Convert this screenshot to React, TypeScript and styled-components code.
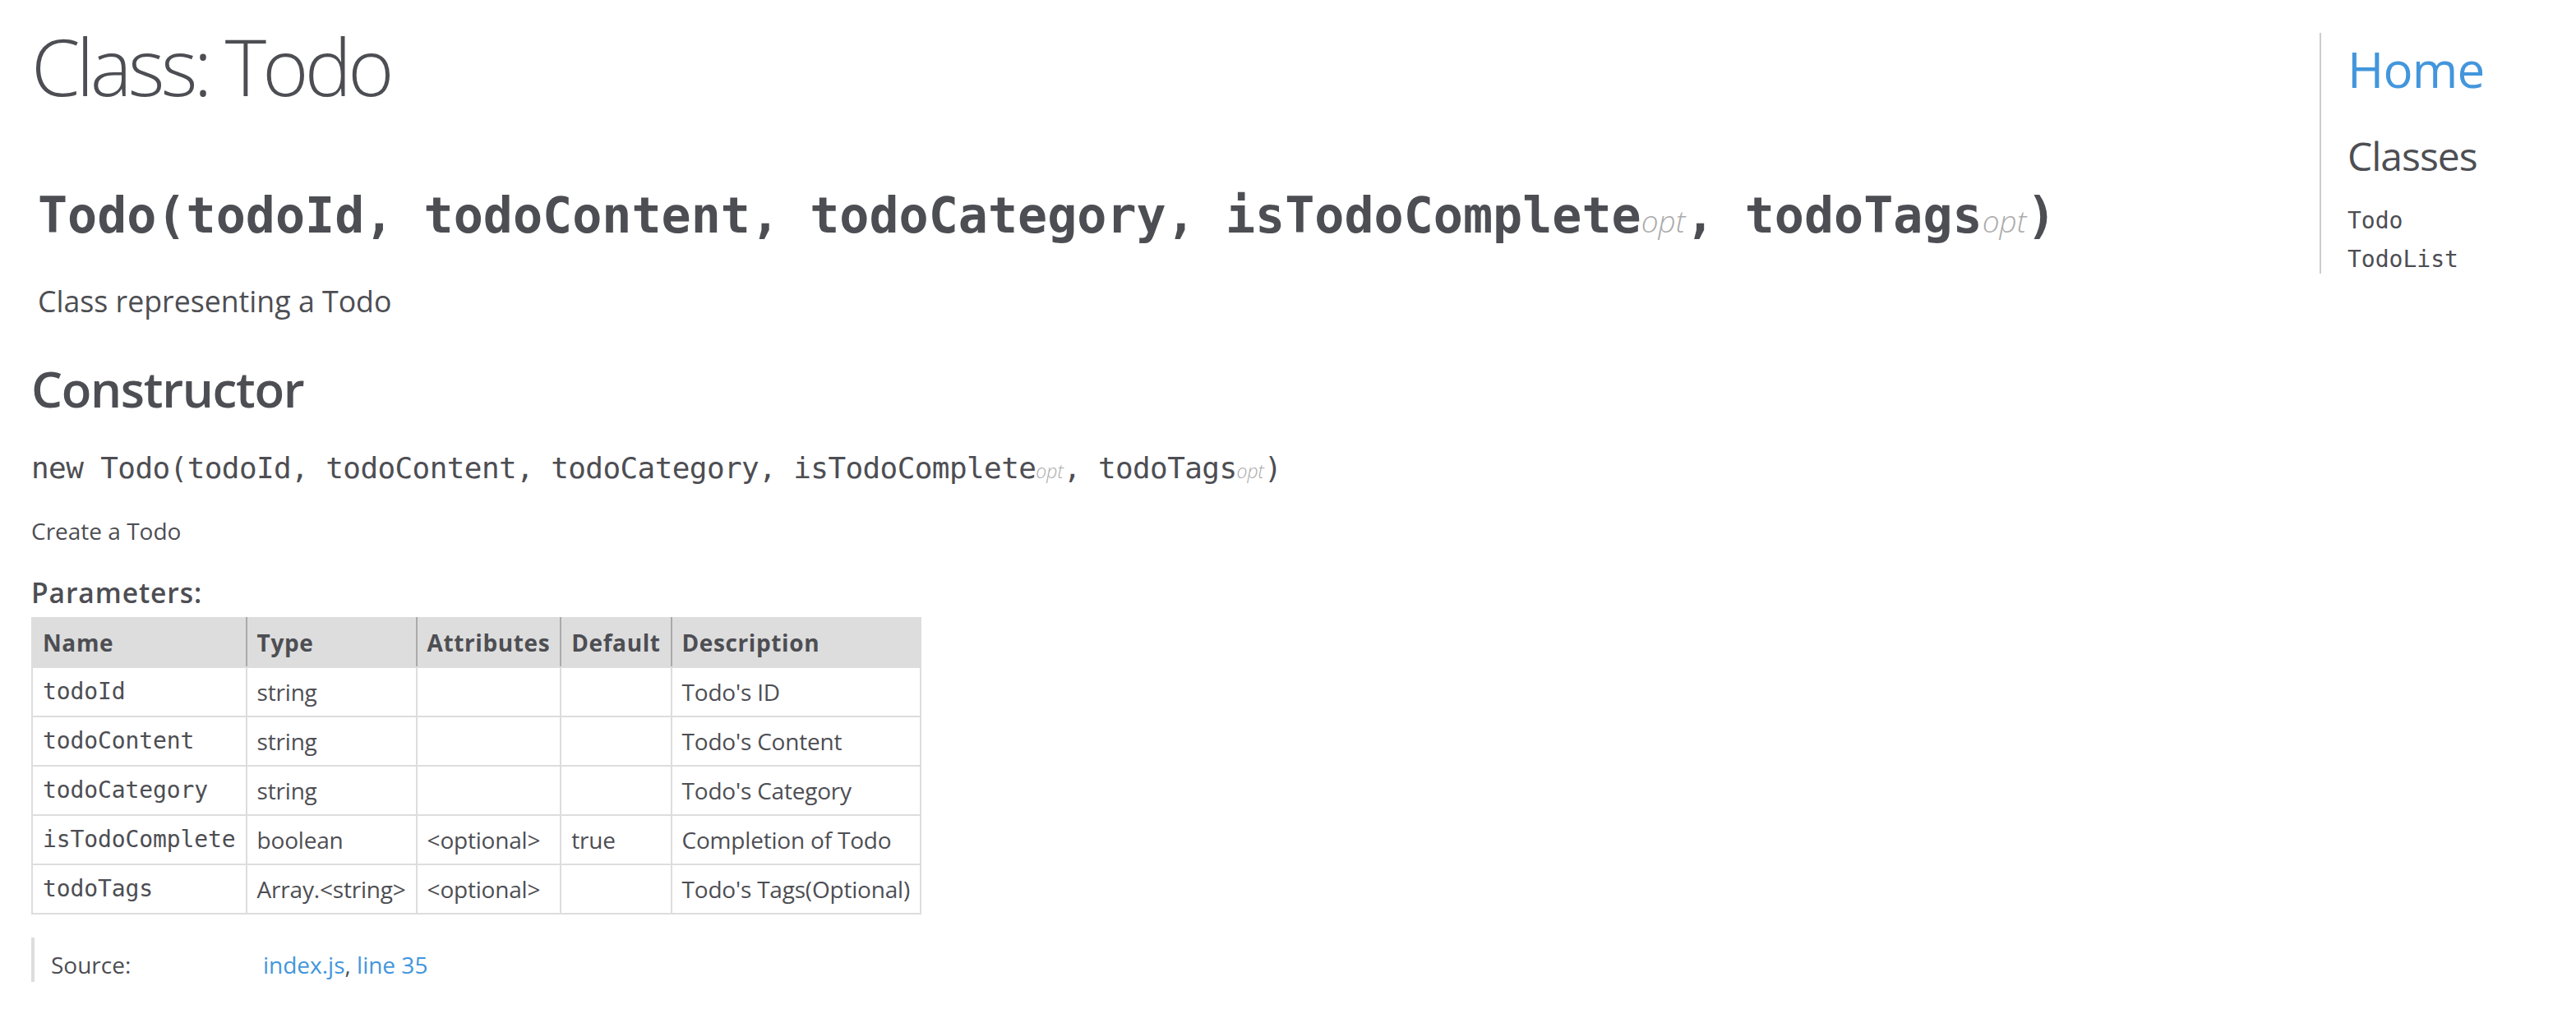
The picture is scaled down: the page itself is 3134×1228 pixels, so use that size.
import React from "react";
import styled, { createGlobalStyle } from "styled-components";

const GlobalStyle = createGlobalStyle`
  html, body {
    margin: 0;
    padding: 0;
    background: #ffffff;
  }
  body {
    font-family: "Open Sans", "Liberation Sans", sans-serif;
    font-size: 28px;
    line-height: 42px;
    color: #4d4e53;
  }
`;

const Page = styled.div`
  display: flex;
  align-items: flex-start;
  width: 100%;
  min-height: 1228px;
`;

const Main = styled.main`
  flex: 1 1 auto;
  padding-left: 38px;
  min-width: 0;
`;

const PageTitle = styled.h1`
  margin: 32px 0 0;
  font-family: "Open Sans", sans-serif;
  font-weight: 300;
  font-size: 96px;
  line-height: 96px;
  letter-spacing: -4.8px;
  color: #4d4e53;
`;

const Header = styled.header`
  padding: 0 8px;
`;

const Signature = styled.h2`
  margin: 98px 0 0;
  font-family: "DejaVu Sans Mono", monospace;
  font-weight: 700;
  font-size: 60px;
  line-height: 72px;
  color: #4d4e53;
  white-space: nowrap;
`;

const Opt = styled.span<{ $size: number }>`
  font-family: "Open Sans", sans-serif;
  font-style: italic;
  font-weight: 300;
  font-size: ${(p) => p.$size}px;
  line-height: 1;
  letter-spacing: 0;
  color: #aaaaaa;
`;

const ClassDescription = styled.div`
  margin-top: 43px;
  font-size: 35.7px;
  line-height: 51px;
`;

const SectionTitle = styled.h2`
  margin: 45px 0 0;
  font-family: "Open Sans", sans-serif;
  font-weight: 600;
  font-size: 60px;
  line-height: 72px;
  letter-spacing: -1.3px;
  color: #4d4e53;
`;

const MemberName = styled.h4`
  margin: 37px 0 0;
  font-family: "DejaVu Sans Mono", monospace;
  font-weight: 400;
  font-size: 36px;
  line-height: 48px;
  letter-spacing: -0.6px;
  color: #4d4e53;
  white-space: nowrap;
`;

const Description = styled.div`
  margin-top: 31px;
  font-size: 28px;
  line-height: 42px;
`;

const SubsectionTitle = styled.h5`
  margin: 32px 0 0;
  font-family: "Open Sans", sans-serif;
  font-weight: 600;
  font-size: 33.6px;
  line-height: 44px;
  letter-spacing: 0.9px;
  color: #4d4e53;
`;

const ParamsTable = styled.table`
  margin-top: 8px;
  border-collapse: collapse;
  border-spacing: 0;
  font-size: 28px;
  line-height: 42px;
  color: #4d4e53;
`;

const HeadRow = styled.tr`
  background: #dddddd;
`;

const HeadCell = styled.th`
  text-align: left;
  vertical-align: top;
  padding: 8px 12px;
  font-weight: 700;
  letter-spacing: 0.6px;
  border: 2px solid #dddddd;
  border-right: 2px solid #aaaaaa;
  &:last-child {
    border-right: 2px solid #dddddd;
  }
`;

const Cell = styled.td<{ $mono?: boolean }>`
  text-align: left;
  vertical-align: top;
  padding: 8px 12px;
  border: 2px solid #dddddd;
  white-space: nowrap;
  letter-spacing: ${(p) => (p.$mono ? "-0.1px" : "-0.2px")};
  font-family: ${(p) =>
    p.$mono ? `"DejaVu Sans Mono", monospace` : `"Open Sans", sans-serif`};
`;

const Details = styled.dl`
  display: flex;
  margin: 28px 0 0;
  border-left: 4px solid #dddddd;
`;

const Term = styled.dt`
  flex: 0 0 278px;
  box-sizing: border-box;
  padding: 12px 0 0 20px;
  font-size: 28px;
  line-height: 42px;
`;

const Definition = styled.dd`
  margin: 0;
  padding-top: 12px;
  font-size: 28px;
  line-height: 42px;
`;

const Link = styled.a`
  color: #4396dc;
  text-decoration: none;
`;

const Nav = styled.nav`
  flex: 0 0 312px;
  box-sizing: border-box;
  margin-top: 40px;
  padding: 8px 0 0 32px;
  border-left: 2px solid #cccccc;
`;

const NavHome = styled.h2`
  margin: 0;
  font-family: "Open Sans", sans-serif;
  font-weight: 400;
  font-size: 60px;
  line-height: 72px;
  letter-spacing: -0.8px;
`;

const NavHeading = styled.h3`
  margin: 41px 0 0;
  font-family: "Open Sans", sans-serif;
  font-weight: 400;
  font-size: 48px;
  line-height: 58px;
  letter-spacing: -1px;
  color: #4d4e53;
`;

const NavList = styled.ul`
  list-style: none;
  margin: 32px 0 0;
  padding: 0;
  display: flex;
  flex-direction: column;
  gap: 12px;
`;

const NavItem = styled.li`
  font-family: "DejaVu Sans Mono", monospace;
  font-size: 28px;
  line-height: 35px;
  color: #4d4e53;
`;

const params = [
  { name: "todoId", type: "string", attr: "", def: "", desc: "Todo's ID" },
  { name: "todoContent", type: "string", attr: "", def: "", desc: "Todo's Content" },
  { name: "todoCategory", type: "string", attr: "", def: "", desc: "Todo's Category" },
  {
    name: "isTodoComplete",
    type: "boolean",
    attr: "<optional>",
    def: "true",
    desc: "Completion of Todo",
  },
  {
    name: "todoTags",
    type: "Array.<string>",
    attr: "<optional>",
    def: "",
    desc: "Todo's Tags(Optional)",
  },
];

export default function App() {
  return (
    <>
      <GlobalStyle />
      <Page>
        <Main>
          <PageTitle>Class: Todo</PageTitle>
          <Header>
            <Signature>
              Todo(todoId, todoContent, todoCategory, isTodoComplete
              <Opt $size={37}>opt</Opt>, todoTags<Opt $size={37}>opt</Opt>)
            </Signature>
            <ClassDescription>Class representing a Todo</ClassDescription>
          </Header>
          <SectionTitle>Constructor</SectionTitle>
          <MemberName>
            new Todo(todoId, todoContent, todoCategory, isTodoComplete
            <Opt $size={23}>opt</Opt>, todoTags<Opt $size={23}>opt</Opt>)
          </MemberName>
          <Description>Create a Todo</Description>
          <SubsectionTitle>Parameters:</SubsectionTitle>
          <ParamsTable>
            <thead>
              <HeadRow>
                <HeadCell>Name</HeadCell>
                <HeadCell>Type</HeadCell>
                <HeadCell>Attributes</HeadCell>
                <HeadCell>Default</HeadCell>
                <HeadCell>Description</HeadCell>
              </HeadRow>
            </thead>
            <tbody>
              {params.map((p) => (
                <tr key={p.name}>
                  <Cell $mono>{p.name}</Cell>
                  <Cell>{p.type}</Cell>
                  <Cell>{p.attr}</Cell>
                  <Cell>{p.def}</Cell>
                  <Cell>{p.desc}</Cell>
                </tr>
              ))}
            </tbody>
          </ParamsTable>
          <Details>
            <Term>Source:</Term>
            <Definition>
              <Link href="#">index.js</Link>, <Link href="#">line 35</Link>
            </Definition>
          </Details>
        </Main>
        <Nav>
          <NavHome>
            <Link href="#">Home</Link>
          </NavHome>
          <NavHeading>Classes</NavHeading>
          <NavList>
            <NavItem>Todo</NavItem>
            <NavItem>TodoList</NavItem>
          </NavList>
        </Nav>
      </Page>
    </>
  );
}
